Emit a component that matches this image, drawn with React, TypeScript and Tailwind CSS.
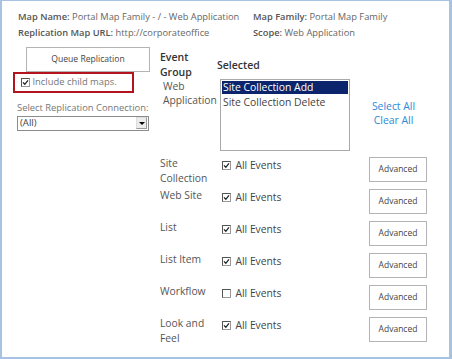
import type { ReactNode } from 'react'

function Check({ checked = true }: { checked?: boolean }) {
  return (
    <span className="inline-flex h-[9px] w-[9px] shrink-0 items-center justify-center border border-[#9a9a9a] border-l-[#555] border-t-[#555] bg-white">
      {checked && (
        <svg width="7" height="7" viewBox="0 0 7 7">
          <path d="M1 3.4 L2.8 5.3 L6 1.4" fill="none" stroke="#222" strokeWidth="1.3" />
        </svg>
      )}
    </span>
  )
}

function EventRow({ label, checked = true }: { label: ReactNode; checked?: boolean }) {
  return (
    <div className="grid h-8 grid-cols-[58px_151px_58px] items-start">
      <div className="text-[10.3px] leading-[15px] text-[#555]">{label}</div>
      <div className="flex items-center gap-[4.5px] pl-[4px] pt-[2px] text-[10.3px] leading-[15px] text-[#444]">
        <Check checked={checked} />
        <span>All Events</span>
      </div>
      <button
        type="button"
        className="mt-[1px] h-[25px] w-[58px] border border-[#b4b4b4] bg-white text-[8.5px] text-[#444]"
      >
        Advanced
      </button>
    </div>
  )
}

export default function App() {
  return (
    <div className="h-[359px] w-[452px] overflow-hidden border-b-2 border-l-2 border-r-[3px] border-t border-[#a7c3e2] bg-white font-['Open_Sans',sans-serif]">
      {/* header */}
      <div className="flex h-[46px] whitespace-nowrap pl-[16px] pt-[8px] text-[9.3px] leading-[16px] text-[#666]">
        <div className="w-[235px]">
          <div>
            <span className="font-semibold text-[#555]">Map Name:</span> Portal Map Family - / - Web Application
          </div>
          <div>
            <span className="font-semibold text-[#555]">Replication Map URL:</span> http://corporateoffice
          </div>
        </div>
        <div>
          <div>
            <span className="font-semibold text-[#555]">Map Family:</span> Portal Map Family
          </div>
          <div>
            <span className="font-semibold text-[#555]">Scope:</span> Web Application
          </div>
        </div>
      </div>

      <div className="flex">
        {/* left column */}
        <div className="ml-[11px] flex w-[147px] flex-col whitespace-nowrap">
          <button
            type="button"
            className="ml-[13px] h-[25px] w-[124px] border border-[#b4b4b4] bg-white text-[8.6px] text-[#444]"
          >
            Queue Replication
          </button>
          <div className="flex h-[21px] w-[121px] items-center gap-[3px] border-2 border-[#b3141d] pb-[1px] pl-[5.5px] text-[9.4px] text-[#777]">
            <Check />
            <span>Include child maps.</span>
          </div>
          <div className="ml-[4px] mt-[8px] text-[9.4px] leading-[14px] text-[#777]">
            Select Replication Connection:
          </div>
          <div className="ml-[4px] mt-[0.5px] flex h-[15px] w-[132px] items-center justify-between border border-[#8c8c8c] bg-white pl-[2px] pr-[1px] text-[9.6px] text-[#444]">
            <span>(All)</span>
            <span className="flex h-[12px] w-[11px] items-center justify-center border border-[#999] border-l-[#ddd] border-t-[#ddd] bg-[#ececec]">
              <span className="h-0 w-0 border-x-[3px] border-t-[3px] border-x-transparent border-t-black" />
            </span>
          </div>
        </div>

        {/* right column */}
        <div className="flex flex-col">
          <div className="flex pt-[2.5px]">
            <div className="w-[57px] text-[10.5px] font-semibold leading-[15px] text-[#333]">
              Event
              <br />
              Group
            </div>
            <div className="pt-[8px] text-[10.5px] font-semibold leading-[15px] text-[#333]">Selected</div>
          </div>

          <div className="mt-[-0.5px] grid grid-cols-[58px_151px_58px]">
            <div className="pl-[3px] text-[10.3px] leading-[14px] text-[#555]">
              Web
              <br />
              Application
            </div>
            <div className="pl-[2px]">
              <div className="h-[72px] w-[130px] whitespace-nowrap border border-[#a9a9a9] bg-white p-[1px] text-[10.4px] leading-[13px] text-[#444]">
                <div className="bg-[#0c246b] pl-[1px] text-white">Site Collection Add</div>
                <div className="pl-[1px] pt-[1.5px]">Site Collection Delete</div>
              </div>
            </div>
            <div className="flex flex-col items-center justify-center pb-[3px] pr-[9px] text-[10.4px] leading-[13.5px] text-[#2c8ad6]">
              <span className="whitespace-nowrap">Select All</span>
              <span className="whitespace-nowrap">Clear All</span>
            </div>
          </div>

          <div className="mt-[5px] flex flex-col">
            <EventRow
              label={
                <>
                  Site
                  <br />
                  Collection
                </>
              }
            />
            <EventRow label="Web Site" />
            <EventRow label="List" />
            <EventRow label="List Item" />
            <EventRow label="Workflow" checked={false} />
            <EventRow
              label={
                <>
                  Look and
                  <br />
                  Feel
                </>
              }
            />
          </div>
        </div>
      </div>
    </div>
  )
}
